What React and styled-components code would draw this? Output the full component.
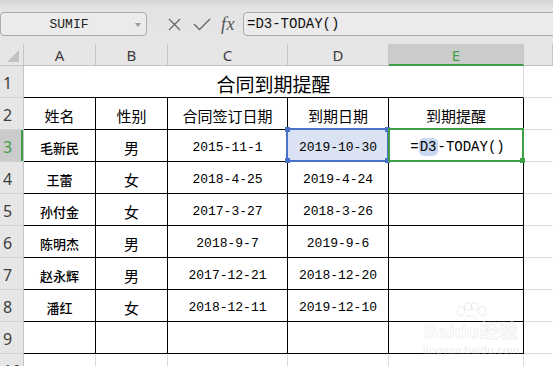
import React from 'react';
import styled, { createGlobalStyle, css } from 'styled-components';

const Global = createGlobalStyle`
  html, body { margin: 0; padding: 0; background: #fff; overflow: hidden; }
  body { font-family: "Noto Sans CJK SC", "Noto Sans", sans-serif; }
`;

const GREEN = '#3f9f47';
const BLUE = '#4a72c8';
const GRID = '#dadada';
const HEAD_LINE = '#c4c4c4';
const MONO = '"Liberation Mono", "Noto Sans CJK SC", monospace';
const CJK = '"Noto Sans CJK SC", "Noto Sans", sans-serif';

const Page = styled.div`
  width: 553px;
  height: 366px;
  position: relative;
  overflow: hidden;
  background: #fff;
`;

const Toolbar = styled.div`
  height: 44px;
  box-sizing: border-box;
  padding-top: 12px;
  display: flex;
  align-items: flex-start;
  background: linear-gradient(#d4d4d4 0px, #e3e3e3 8px, #e6e6e6 100%);
`;

const NameBox = styled.div`
  width: 147px;
  height: 24px;
  box-sizing: border-box;
  border: 1px solid #ababab;
  border-radius: 4px;
  background: #ebebeb;
  display: flex;
  align-items: center;
`;

const NameText = styled.span`
  flex: 1;
  text-align: center;
  font-family: ${MONO};
  font-size: 13px;
  color: #222;
  padding-left: 2px;
`;

const DropArrow = styled.span`
  width: 0;
  height: 0;
  margin-right: 5px;
  margin-top: 1px;
  border-left: 3px solid transparent;
  border-right: 3px solid transparent;
  border-top: 4px solid #9a9a9a;
`;

const IconGroup = styled.div`
  display: flex;
  align-items: center;
  height: 24px;
  margin-left: 21px;
  margin-right: 8px;
  gap: 9px;
`;

const IconSvg = styled.svg`
  display: block;
  flex: none;
`;

const Fx = styled.span`
  font-family: "Liberation Serif", "DejaVu Serif", serif;
  font-style: italic;
  font-size: 18px;
  color: #555;
  line-height: 24px;
  margin-left: 1px;
  letter-spacing: 0.5px;
`;

const FormulaBox = styled.div`
  flex: 1;
  height: 24px;
  box-sizing: border-box;
  margin-right: -6px;
  border: 1px solid #ababab;
  border-radius: 4px;
  background: #ebebeb;
  padding-left: 3px;
  font-family: ${MONO};
  font-size: 14px;
  line-height: 22px;
  color: #111;
`;

const Sheet = styled.div`
  display: grid;
  grid-template-columns: 24px 72px 72px 120px 101px 135px 1fr;
  grid-template-rows: 22px repeat(10, 32px);
`;

const Corner = styled.div`
  background: #e6e6e6;
  border-right: 1px solid ${HEAD_LINE};
  border-bottom: 1px solid ${HEAD_LINE};
  display: flex;
  align-items: flex-end;
  justify-content: flex-end;
  padding: 0 4px 3px 0;
`;

const ColHead = styled.div`
  background: ${(p) => (p.$active ? '#cbcbcb' : '#e6e6e6')};
  border-right: 1px solid ${HEAD_LINE};
  border-bottom: ${(p) => (p.$active ? `2px solid ${GREEN}` : `1px solid ${HEAD_LINE}`)};
  color: ${(p) => (p.$active ? GREEN : '#3d3d3d')};
  font-family: "Noto Sans", "Liberation Sans", sans-serif;
  font-size: 15px;
  display: flex;
  align-items: center;
  justify-content: center;
  padding-top: ${(p) => (p.$active ? '1px' : '0')};
`;

const RowHead = styled.div`
  background: ${(p) => (p.$active ? '#cbcbcb' : '#e6e6e6')};
  border-right: 1px solid ${HEAD_LINE};
  border-bottom: 1px solid #d0d0d0;
  color: ${(p) => (p.$active ? GREEN : '#3d3d3d')};
  font-family: "Noto Sans", "Liberation Sans", sans-serif;
  font-size: 16px;
  display: flex;
  align-items: center;
  padding: 2px 0 0 3px;
  box-sizing: border-box;
  ${(p) => p.$active && css`box-shadow: inset -2px 0 0 ${GREEN};`}
`;

const Cell = styled.div`
  position: relative;
  box-sizing: border-box;
  border-right: 1px solid ${(p) => (p.$rightLine === 'black' ? '#000' : p.$rightLine === 'none' ? 'transparent' : GRID)};
  border-bottom: 1px solid ${(p) => (p.$bottomLine === 'black' ? '#000' : p.$bottomLine === 'none' ? 'transparent' : GRID)};
  background: ${(p) => p.$bg || '#fff'};
  display: flex;
  align-items: center;
  justify-content: center;
  padding-top: 3px;
  color: #000;
  white-space: nowrap;
  grid-column: ${(p) => (p.$span ? `span ${p.$span}` : 'auto')};
  font-family: ${(p) => (p.$kind === 'mono' ? MONO : CJK)};
  font-size: ${(p) =>
    p.$kind === 'mono' ? '13px' : p.$kind === 'name' ? '13px' : p.$kind === 'title' ? '19px' : '15px'};
  font-weight: ${(p) => (p.$kind === 'name' ? 500 : 400)};
`;

const Formula = styled.span`
  font-family: ${MONO};
  font-size: 14px;
  padding-left: 3px;
`;

const RefChip = styled.span`
  background: #c9d8f2;
  border-radius: 5px;
  padding: 1px 1px;
`;

const BlueFrame = styled.div`
  position: absolute;
  top: -2px;
  left: -2px;
  right: -1px;
  bottom: -1px;
  border: 2px solid ${BLUE};
  pointer-events: none;
  z-index: 2;
`;

const Handle = styled.span`
  position: absolute;
  width: 5px;
  height: 5px;
  background: ${(p) => p.$color};
  ${(p) => (p.$v === 'top' ? 'top: -3px;' : 'bottom: -3px;')}
  ${(p) => (p.$h === 'left' ? 'left: -3px;' : 'right: -3px;')}
`;

const GreenFrame = styled.div`
  position: absolute;
  top: -2px;
  left: -1px;
  right: -1px;
  bottom: -1px;
  border: 2px solid ${GREEN};
  pointer-events: none;
  z-index: 3;
`;

const Watermark = styled.div`
  position: absolute;
  left: 421px;
  top: 302px;
  width: 100px;
  display: flex;
  flex-direction: column;
  align-items: center;
  pointer-events: none;
  z-index: 5;
`;

const WmBrand = styled.div`
  font-family: "Liberation Sans", "Noto Sans CJK SC", sans-serif;
  font-weight: 700;
  font-size: 19px;
  line-height: 20px;
  letter-spacing: 0.5px;
  color: rgba(255, 255, 255, 0.4);
  -webkit-text-stroke: 0.7px rgba(200, 200, 200, 0.35);
`;

const WmUrl = styled.div`
  font-family: "Liberation Sans", sans-serif;
  font-weight: 700;
  font-size: 11px;
  line-height: 12px;
  color: rgba(205, 205, 205, 0.3);
  margin-top: 2px;
`;

const cols = ['A', 'B', 'C', 'D', 'E'];
const people = [
  ['毛新民', '男', '2015-11-1', '2019-10-30'],
  ['王蕾', '女', '2018-4-25', '2019-4-24'],
  ['孙付金', '女', '2017-3-27', '2018-3-26'],
  ['陈明杰', '男', '2018-9-7', '2019-9-6'],
  ['赵永辉', '男', '2017-12-21', '2018-12-20'],
  ['潘红', '女', '2018-12-11', '2019-12-10'],
];

function Paw() {
  return (
    <svg width="38" height="20" viewBox="0 0 38 20" style={{ display: 'block' }}>
      <g fill="none" stroke="rgba(200,200,200,0.35)" strokeWidth="1">
        <ellipse cx="9" cy="9" rx="3.5" ry="4.5" />
        <ellipse cx="16" cy="4.5" rx="3.5" ry="4" />
        <ellipse cx="23" cy="4.5" rx="3.5" ry="4" />
        <ellipse cx="30" cy="9" rx="3.5" ry="4.5" />
        <path d="M12 19 C14 12 24 12 26 19" />
      </g>
    </svg>
  );
}

export default function App() {
  return (
    <Page>
      <Global />
      <Toolbar>
        <NameBox>
          <NameText>SUMIF</NameText>
          <DropArrow />
        </NameBox>
        <IconGroup>
          <IconSvg width="13" height="13" viewBox="0 0 13 13">
            <path d="M1 1 L12 12 M12 1 L1 12" stroke="#666" strokeWidth="1.2" fill="none" />
          </IconSvg>
          <IconSvg width="18" height="13" viewBox="0 0 18 13" style={{ marginLeft: 3 }}>
            <path d="M1 6 L6.5 11.5 L17 1" stroke="#666" strokeWidth="1.3" fill="none" />
          </IconSvg>
          <Fx>fx</Fx>
        </IconGroup>
        <FormulaBox>=D3-TODAY()</FormulaBox>
      </Toolbar>

      <Sheet>
        <Corner>
          <svg width="12" height="12" viewBox="0 0 12 12" style={{ display: 'block' }}>
            <polygon points="12,0 12,12 0,12" fill="#c2c2c2" />
          </svg>
        </Corner>
        {cols.map((c) => (
          <ColHead key={c} $active={c === 'E'}>{c}</ColHead>
        ))}
        <ColHead />

        <RowHead>1</RowHead>
        <Cell $span={5} $kind="title" $rightLine="grid" $bottomLine="black">合同到期提醒</Cell>
        <Cell $rightLine="none" $bottomLine="grid" />

        <RowHead>2</RowHead>
        {['姓名', '性别', '合同签订日期', '到期日期', '到期提醒'].map((h) => (
          <Cell key={h} $kind="head" $rightLine="black" $bottomLine="black">{h}</Cell>
        ))}
        <Cell $rightLine="none" $bottomLine="grid" />

        {people.map((p, i) => {
          const active = i === 0;
          return (
            <React.Fragment key={p[0]}>
              <RowHead $active={active}>{i + 3}</RowHead>
              <Cell $kind="name" $rightLine="black" $bottomLine="black">{p[0]}</Cell>
              <Cell $kind="head" $rightLine="black" $bottomLine="black">{p[1]}</Cell>
              <Cell $kind="mono" $rightLine="black" $bottomLine="black">{p[2]}</Cell>
              <Cell $kind="mono" $rightLine="black" $bottomLine="black" $bg={active ? '#dae2f3' : undefined}>
                {p[3]}
                {active && (
                  <BlueFrame>
                    <Handle $color={BLUE} $v="top" $h="left" />
                    <Handle $color={BLUE} $v="top" $h="right" />
                    <Handle $color={BLUE} $v="bottom" $h="left" />
                    <Handle $color={BLUE} $v="bottom" $h="right" />
                  </BlueFrame>
                )}
              </Cell>
              <Cell $kind="mono" $rightLine="black" $bottomLine="black">
                {active && (
                  <>
                    <Formula>
                      =<RefChip>D3</RefChip>-TODAY()
                    </Formula>
                    <GreenFrame>
                      <Handle $color={GREEN} $v="bottom" $h="right" />
                    </GreenFrame>
                  </>
                )}
              </Cell>
              <Cell $rightLine="none" $bottomLine="grid" />
            </React.Fragment>
          );
        })}

        <RowHead>9</RowHead>
        {cols.map((c) => (
          <Cell key={c} $rightLine="black" $bottomLine="black" />
        ))}
        <Cell $rightLine="none" $bottomLine="grid" />

        <RowHead>10</RowHead>
        {cols.map((c) => (
          <Cell key={c} $rightLine="grid" $bottomLine="grid" />
        ))}
        <Cell $rightLine="none" $bottomLine="grid" />
      </Sheet>

      <Watermark>
        <Paw />
        <WmBrand>Baidu经验</WmBrand>
        <WmUrl>jingyan.baidu.com</WmUrl>
      </Watermark>
    </Page>
  );
}
